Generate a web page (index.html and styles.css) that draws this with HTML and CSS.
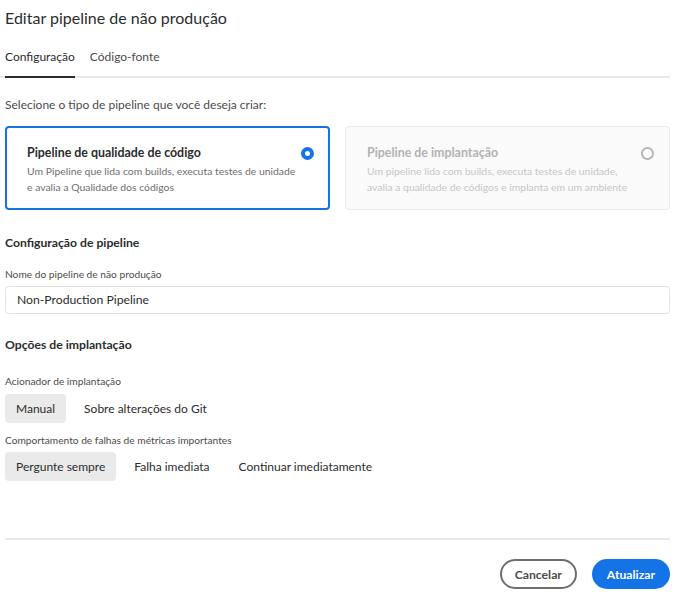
FILE: index.html
```html
<!DOCTYPE html>
<html lang="pt">
<head>
<meta charset="utf-8">
<link rel="stylesheet" href="styles.css">
</head>
<body>
<div class="dialog">
  <h1 class="title">Editar pipeline de não produção</h1>
  <div class="tabs">
    <div class="tab active">Configuração</div>
    <div class="tab">Código-fonte</div>
  </div>
  <p class="intro">Selecione o tipo de pipeline que você deseja criar:</p>
  <div class="cards">
    <div class="card selected">
      <div class="card-text">
        <div class="card-title">Pipeline de qualidade de código</div>
        <div class="card-desc">Um Pipeline que lida com builds, executa testes de unidade e avalia a Qualidade dos códigos</div>
      </div>
      <span class="radio on"></span>
    </div>
    <div class="card disabled">
      <div class="card-text">
        <div class="card-title">Pipeline de implantação</div>
        <div class="card-desc">Um pipeline lida com builds, executa testes de unidade, avalia a qualidade de códigos e implanta em um ambiente</div>
      </div>
      <span class="radio"></span>
    </div>
  </div>
  <h2 class="section">Configuração de pipeline</h2>
  <div class="label">Nome do pipeline de não produção</div>
  <div class="input">Non-Production Pipeline</div>
  <h2 class="section s2">Opções de implantação</h2>
  <div class="label l2">Acionador de implantação</div>
  <div class="group">
    <span class="opt sel">Manual</span>
    <span class="opt">Sobre alterações do Git</span>
  </div>
  <div class="label l3">Comportamento de falhas de métricas importantes</div>
  <div class="group">
    <span class="opt sel">Pergunte sempre</span>
    <span class="opt">Falha imediata</span>
    <span class="opt">Continuar imediatamente</span>
  </div>
  <div class="footer">
    <button class="btn secondary">Cancelar</button>
    <button class="btn primary">Atualizar</button>
  </div>
</div>
</body>
</html>
```
FILE: styles.css
```css
* { box-sizing: border-box; }
html, body { margin: 0; padding: 0; background: #fff; }
body {
  font-family: "Lato", "Open Sans", sans-serif;
  color: #2c2c2c;
}
.dialog {
  width: 670px;
  padding: 0 0 0 5px;
  display: flex;
  flex-direction: column;
}
.title {
  font-size: 16px;
  font-weight: 400;
  margin: 7px 0 0;
  line-height: 22px;
  color: #2c2c2c;
}
.tabs {
  display: flex;
  gap: 15px;
  margin: 18px 0 0 -5px;
  padding-left: 5px;
  border-bottom: 2px solid #eaeaea;
}
.tab {
  font-size: 12px;
  line-height: 20px;
  padding-bottom: 9px;
  color: #4b4b4b;
  margin-bottom: -2px;
  border-bottom: 2px solid transparent;
}
.tab.active {
  color: #2c2c2c;
  border-bottom-color: #2c2c2c;
}
.intro {
  font-size: 12px;
  line-height: 18px;
  color: #4b4b4b;
  margin: 18px 0 0;
}
.cards {
  display: grid;
  grid-template-columns: 1fr 1fr;
  gap: 15px;
  margin-top: 12px;
}
.card {
  height: 84px;
  border-radius: 4px;
  padding: 16px 14px 0 20px;
  display: flex;
  justify-content: space-between;
  align-items: flex-start;
}
.card.selected {
  border: 2px solid #1473e6;
}
.card.disabled {
  border: 1px solid #eaeaea;
  background: #fafafa;
  padding: 17px 15px 0 21px;
}
.card-title {
  font-size: 12.4px;
  font-weight: 700;
  line-height: 18px;
  color: #2c2c2c;
}
.card-desc {
  font-size: 10.4px;
  line-height: 16px;
  color: #6e6e6e;
  margin-top: 1px;
  max-width: 275px;
}
.card.disabled .card-title { color: #b3b3b3; }
.card.disabled .card-desc { color: #c6c6c6; }
.radio {
  flex: none;
  width: 13px;
  height: 13px;
  border-radius: 50%;
  border: 2px solid #b3b3b3;
  margin-top: 3px;
  background: #fff;
}
.radio.on {
  border: 4px solid #1473e6;
}
.section {
  font-size: 12.2px;
  font-weight: 700;
  margin: 24px 0 0;
  line-height: 18px;
  color: #2c2c2c;
}
.section.s2 { margin-top: 22px; }
.label {
  font-size: 10.2px;
  line-height: 14px;
  color: #4b4b4b;
  margin-top: 15px;
}
.label.l2 { margin-top: 20px; }
.label.l3 { margin-top: 10px; }
.input {
  margin-top: 5px;
  height: 28px;
  border: 1px solid #e1e1e1;
  border-radius: 4px;
  padding: 0 11px;
  font-size: 12.2px;
  line-height: 26px;
  color: #2c2c2c;
}
.group {
  display: flex;
  margin-top: 6px;
}
.l3 + .group { margin-top: 5px; }
.opt {
  font-size: 12px;
  line-height: 29px;
  height: 29px;
  padding: 0 11px;
  margin-right: 7px;
  border-radius: 4px;
  color: #2c2c2c;
}
.opt.sel { background: #eaeaea; }
.footer {
  margin-top: 57px;
  border-top: 2px solid #eaeaea;
  padding-top: 19px;
  display: flex;
  justify-content: flex-end;
  gap: 15px;
}
.btn {
  font-family: inherit;
  font-size: 12.2px;
  font-weight: 700;
  height: 30px;
  border-radius: 15px;
  padding: 0 13px;
}
.btn.secondary {
  background: #fff;
  border: 2px solid #6e6e6e;
  color: #4b4b4b;
}
.btn.primary {
  background: #1473e6;
  border: 2px solid #1473e6;
  color: #fff;
}
```
